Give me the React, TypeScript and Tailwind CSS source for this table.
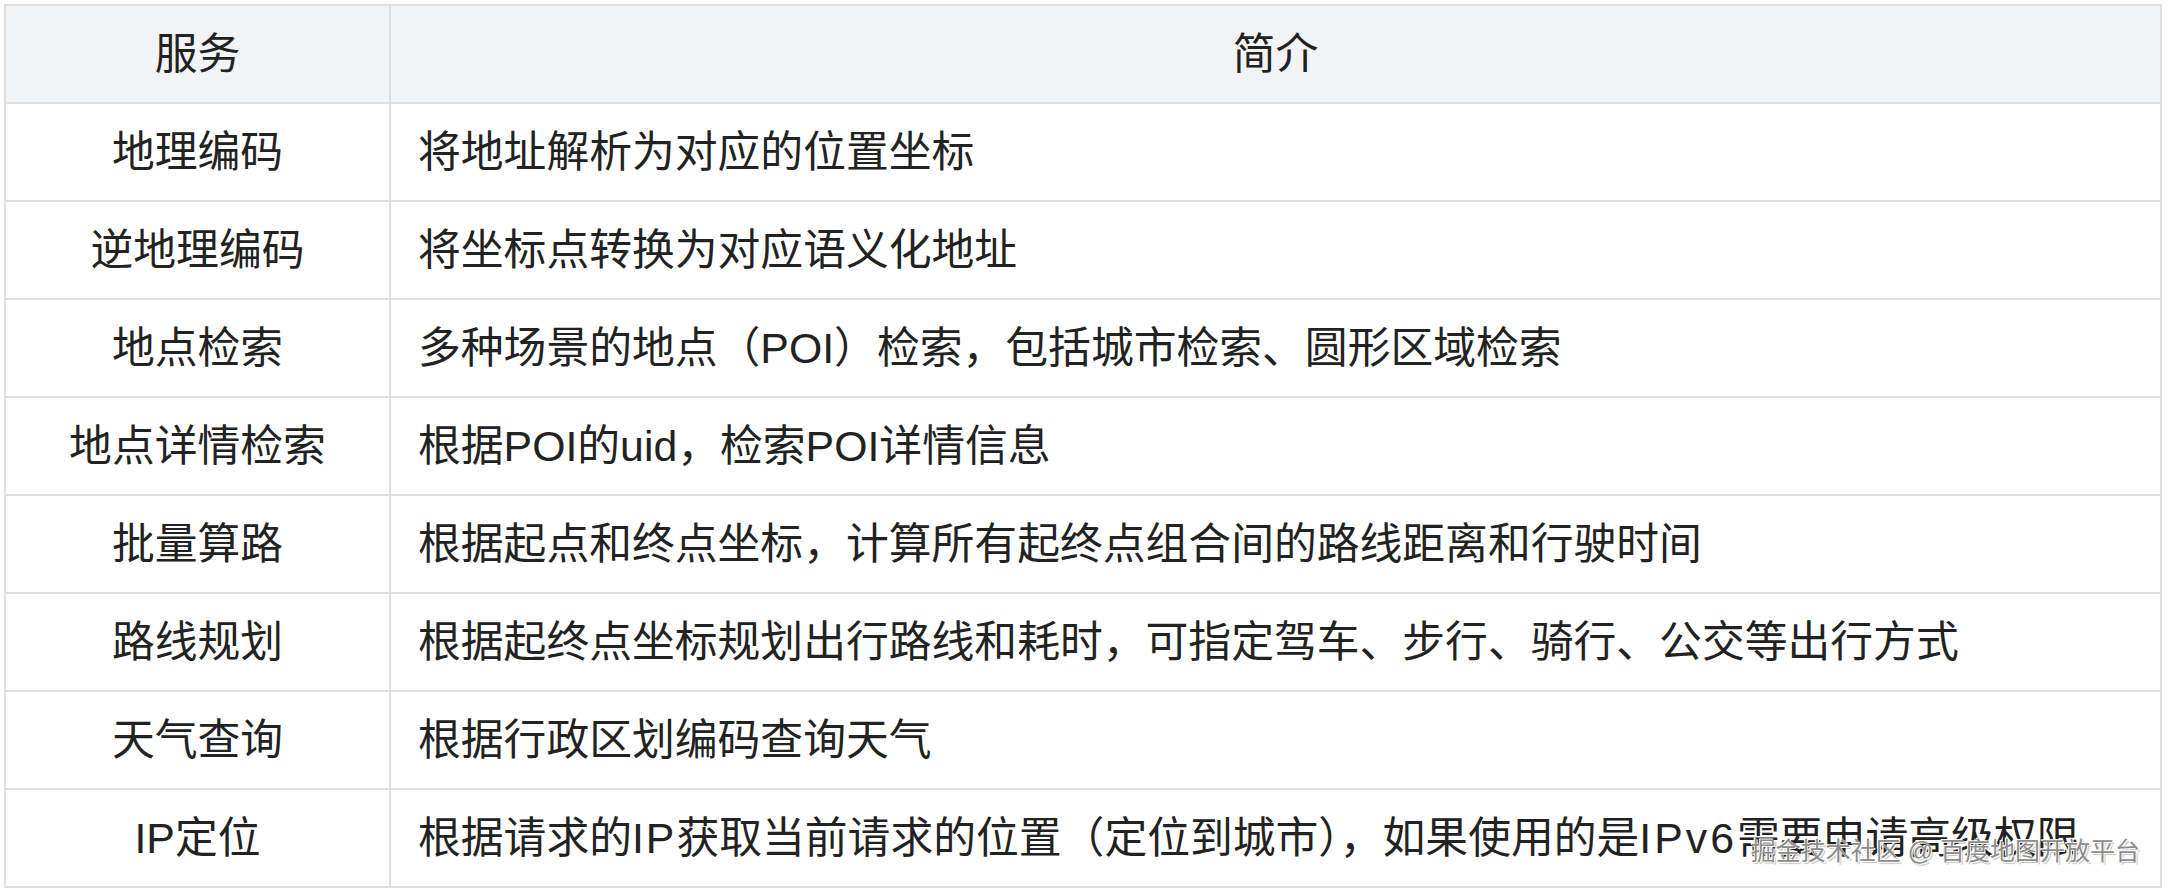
import type { ReactNode } from "react";

const rows: [string, ReactNode][] = [
  ["地理编码", "将地址解析为对应的位置坐标"],
  ["逆地理编码", "将坐标点转换为对应语义化地址"],
  ["地点检索", "多种场景的地点（POI）检索，包括城市检索、圆形区域检索"],
  ["地点详情检索", "根据POI的uid，检索POI详情信息"],
  ["批量算路", "根据起点和终点坐标，计算所有起终点组合间的路线距离和行驶时间"],
  ["路线规划", "根据起终点坐标规划出行路线和耗时，可指定驾车、步行、骑行、公交等出行方式"],
  ["天气查询", "根据行政区划编码查询天气"],
  [
    "IP定位",
    <>
      根据请求的<span className="tracking-[2px]">IP</span>获取当前请求的位置（定位到城市），如果使用的是
      <span className="tracking-[3px]">IPv6</span>需要申请高级权限
    </>,
  ],
];

export default function App() {
  return (
    <div className="relative w-[2168px] h-[890px] bg-white pl-[4px] pt-[4px] font-['Liberation_Sans','Noto_Sans_CJK_SC',sans-serif] text-[#222]">
      <table className="w-[2158px] border-collapse table-fixed text-[42.8px] leading-none">
        <colgroup>
          <col className="w-[385px]" />
          <col />
        </colgroup>
        <thead>
          <tr className="h-[98px] bg-[#f2f3f5]">
            <th className="border-2 border-[#dedfe1] font-normal text-center">服务</th>
            <th className="border-2 border-[#dedfe1] font-normal text-center">简介</th>
          </tr>
        </thead>
        <tbody>
          {rows.map(([name, desc]) => (
            <tr key={name} className="h-[98px]">
              <td className="border-2 border-[#dedfe1] text-center">{name}</td>
              <td className="border-2 border-[#dedfe1] pl-[27px] whitespace-nowrap">{desc}</td>
            </tr>
          ))}
        </tbody>
      </table>
      {/* watermark */}
      <div className="absolute right-[28px] bottom-[26px] text-[25px] leading-none text-[#8c8c8c] [text-shadow:1px_1px_0_#fff,-1px_-1px_0_#fff,2px_2px_1px_rgba(0,0,0,0.25)]">
        掘金技术社区 @ 百度地图开放平台
      </div>
    </div>
  );
}
